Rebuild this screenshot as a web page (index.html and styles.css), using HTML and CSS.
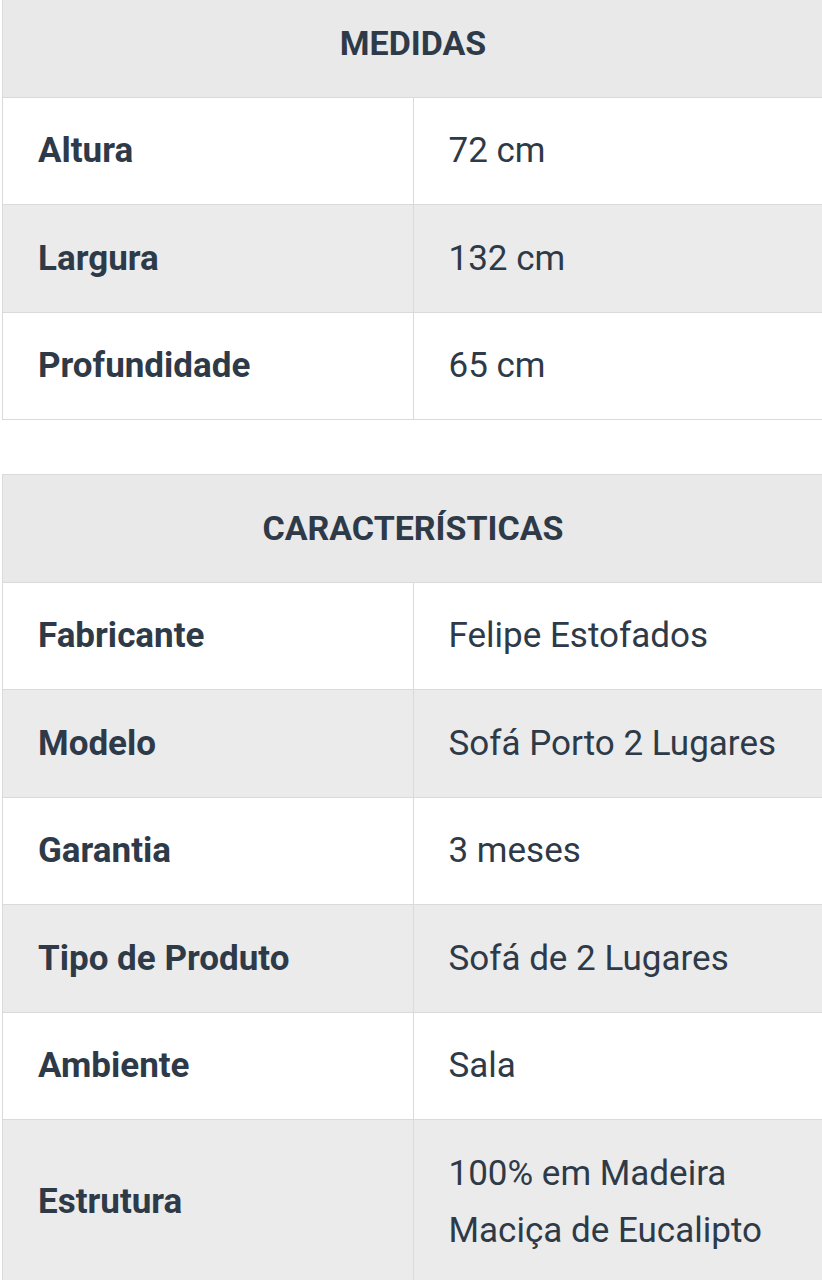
FILE: index.html
```html
<!DOCTYPE html>
<html lang="pt-BR">
<head>
    <meta charset="UTF-8">
    <meta name="viewport" content="width=device-width, initial-scale=1.0">
    <title>Sofá Porto 2 Lugares - Ficha Técnica</title>
    <link rel="stylesheet" href="styles.css">
</head>
<body>
    <table class="spec first">
        <thead>
            <tr><th colspan="2">MEDIDAS</th></tr>
        </thead>
        <tbody>
            <tr><td class="label">Altura</td><td>72 cm</td></tr>
            <tr><td class="label">Largura</td><td>132 cm</td></tr>
            <tr><td class="label">Profundidade</td><td>65 cm</td></tr>
        </tbody>
    </table>

    <table class="spec">
        <thead>
            <tr><th colspan="2">CARACTERÍSTICAS</th></tr>
        </thead>
        <tbody>
            <tr><td class="label">Fabricante</td><td>Felipe Estofados</td></tr>
            <tr><td class="label">Modelo</td><td>Sofá Porto 2 Lugares</td></tr>
            <tr><td class="label">Garantia</td><td>3 meses</td></tr>
            <tr><td class="label">Tipo de Produto</td><td>Sofá de 2 Lugares</td></tr>
            <tr><td class="label">Ambiente</td><td>Sala</td></tr>
            <tr><td class="label">Estrutura</td><td>100% em Madeira<br>Maciça de Eucalipto</td></tr>
        </tbody>
    </table>
</body>
</html>
```

FILE: styles.css
```css
body {
    margin: 0;
    background: white;
    font-family: Roboto, "Liberation Sans", sans-serif;
    color: #2e3a48;
    overflow: hidden;
}
.spec {
    border-collapse: collapse;
    width: 822px;
    margin: 0 0 54px 2px;
    table-layout: fixed;
    font-size: 35px;
    line-height: 57px;
}
.spec.first {
    margin-top: -11px;
}
.spec th,
.spec td {
    border: 1px solid #dadada;
    padding: 24.5px 35px 25px 35px;
    text-align: left;
    vertical-align: middle;
}
.spec th {
    background: #e9e9e9;
    text-align: center;
    font-weight: 700;
    font-size: 34px;
}
.spec td {
    font-weight: 400;
}
.spec td.label {
    font-weight: 700;
}
.spec tbody tr:nth-child(even) td {
    background: #ebebeb;
}
```
